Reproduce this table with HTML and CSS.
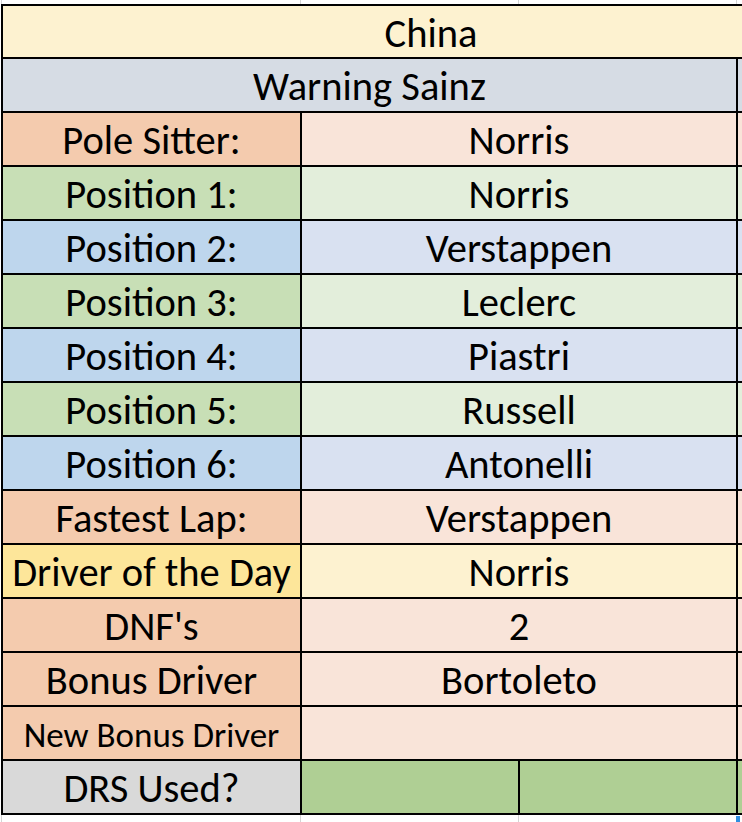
FILE: index.html
```html
<!DOCTYPE html>
<html>
<head>
<meta charset="utf-8">
<link rel="stylesheet" href="styles.css">
</head>
<body>
<div class="sheet">
  <div class="gridlines top"><span></span><span></span><span></span><span></span></div>
  <div class="table">
    <div class="cell c-china span4">China</div>

    <div class="cell c-warn span3">Warning Sainz</div>
    <div class="cell c-warn"></div>

    <div class="cell l-orange">Pole Sitter:</div>
    <div class="cell v-orange span2">Norris</div>
    <div class="cell v-orange"></div>

    <div class="cell l-green">Position 1:</div>
    <div class="cell v-green span2">Norris</div>
    <div class="cell v-green"></div>

    <div class="cell l-blue">Position 2:</div>
    <div class="cell v-blue span2">Verstappen</div>
    <div class="cell v-blue"></div>

    <div class="cell l-green">Position 3:</div>
    <div class="cell v-green span2">Leclerc</div>
    <div class="cell v-green"></div>

    <div class="cell l-blue">Position 4:</div>
    <div class="cell v-blue span2">Piastri</div>
    <div class="cell v-blue"></div>

    <div class="cell l-green">Position 5:</div>
    <div class="cell v-green span2">Russell</div>
    <div class="cell v-green"></div>

    <div class="cell l-blue">Position 6:</div>
    <div class="cell v-blue span2">Antonelli</div>
    <div class="cell v-blue"></div>

    <div class="cell l-orange">Fastest Lap:</div>
    <div class="cell v-orange span2">Verstappen</div>
    <div class="cell v-orange"></div>

    <div class="cell l-gold">Driver of the Day</div>
    <div class="cell v-gold span2">Norris</div>
    <div class="cell v-gold"></div>

    <div class="cell l-orange">DNF's</div>
    <div class="cell v-orange span2">2</div>
    <div class="cell v-orange"></div>

    <div class="cell l-orange">Bonus Driver</div>
    <div class="cell v-orange span2">Bortoleto</div>
    <div class="cell v-orange"></div>

    <div class="cell l-orange small">New Bonus Driver</div>
    <div class="cell v-orange span2"></div>
    <div class="cell v-orange"></div>

    <div class="cell l-gray">DRS Used?</div>
    <div class="cell g-green"></div>
    <div class="cell g-green"></div>
    <div class="cell g-green"></div>
  </div>
  <div class="gridlines bottom"><span></span><span></span><span></span><span class="sel"></span></div>
</div>
</body>
</html>
```

FILE: styles.css
```css
html, body {
  margin: 0;
  padding: 0;
  background: #ffffff;
  overflow: hidden;
  width: 742px;
  height: 822px;
}

.sheet {
  width: 742px;
  height: 822px;
  overflow: hidden;
  font-family: "Carlito", "Lato", "Liberation Sans", sans-serif;
  color: #000;
}

.gridlines {
  display: grid;
  grid-template-columns: 299px 218px 218px 123px;
  margin-left: 1px;
}
.gridlines.top { height: 4px; }
.gridlines.bottom { height: 7px; }
.gridlines span {
  border-left: 1px solid #d4d4d4;
}
.gridlines span.sel {
  border-left: 4px solid #2f8fe0;
  margin-top: 1px;
}

.table {
  display: grid;
  grid-template-columns: 297px 216px 216px 121px;
  grid-template-rows: 51px repeat(14, 52px);
  gap: 2px;
  padding: 2px;
  background: #000;
  margin-left: 1px;
  width: max-content;
}

.cell {
  display: flex;
  align-items: flex-end;
  justify-content: center;
  font-size: 40.5px;
  line-height: 1;
  padding-bottom: 5px;
  white-space: nowrap;
  overflow: hidden;
}
.cell.small { font-size: 35px; padding-bottom: 6px; }

.span4 { grid-column: span 4; }
.span3 { grid-column: span 3; }
.span2 { grid-column: span 2; }

.c-china { background: #fdf2d0; padding-bottom: 4px; }
.c-warn { background: #d6dce4; }
.l-orange { background: #f4cbae; }
.v-orange { background: #f9e4d9; }
.l-green { background: #c8dfb6; }
.v-green { background: #e3eedb; }
.l-blue { background: #bed6ed; }
.v-blue { background: #d9e1f1; }
.l-gold { background: #fde69a; }
.v-gold { background: #fdf2d0; }
.l-gray { background: #d9d9d9; }
.g-green { background: #afcf94; }
```
